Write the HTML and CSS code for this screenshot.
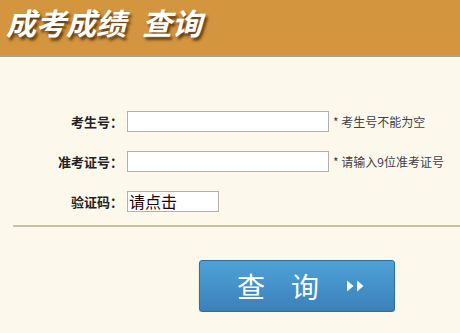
FILE: index.html
```html
<!DOCTYPE html>
<html lang="zh-CN">
<head>
  <meta charset="UTF-8">
  <title>成考成绩查询</title>
  <link rel="stylesheet" href="styles.css">
</head>
<body>
  <div class="header">
    <h1>成考成绩<span class="gap"></span>查询</h1>
  </div>

  <div class="form">
    <div class="row">
      <label>考生号：</label>
      <input type="text" class="field">
      <span class="tip">* 考生号不能为空</span>
    </div>
    <div class="row">
      <label>准考证号：</label>
      <input type="text" class="field">
      <span class="tip">* 请输入9位准考证号</span>
    </div>
    <div class="row">
      <label>验证码：</label>
      <div class="captcha">请点击</div>
    </div>
  </div>

  <hr class="divider">

  <div class="actions">
    <button class="btn-query"><span>查</span><span>询</span>
      <svg width="22" height="14" viewBox="0 0 22 14"><path d="M2 1.5 L8.5 7 L2 12.5 Z M12 1.5 L18.5 7 L12 12.5 Z" fill="#fff"/></svg>
    </button>
  </div>
</body>
</html>
```

FILE: styles.css
```css
body {
  margin: 0;
  background-color: #fcf9ec;
  font-family: "Noto Sans CJK SC", "Liberation Sans", sans-serif;
}
/* orange title bar */
.header {
  background-color: #d4953f;
  height: 55px;
  border-bottom: 2px solid #a9a294;
}
.header h1 {
  margin: 0;
  padding: 2px 0 0 6px;
  font-size: 30px;
  line-height: 40px;
  font-style: italic;
  font-weight: bold;
  color: #fff;
  text-shadow: 2px 3px 3px rgba(60, 30, 0, 0.8);
}
.header .gap {
  display: inline-block;
  width: 16px;
}
.form {
  padding-top: 54px;
}
.row {
  display: flex;
  align-items: center;
  height: 21px;
  margin-bottom: 19px;
}
.row label {
  width: 123px;
  text-align: right;
  font-size: 13px;
  font-weight: bold;
  color: #222;
  padding-right: 4px;
}
.field {
  margin: 0;
  padding: 0;
  border: 1px solid #b0b0b0;
  box-sizing: content-box;
  width: 200px;
  height: 19px;
  background: #fff;
}
.tip {
  margin-left: 4px;
  font-size: 12px;
  color: #3c4048;
}
.captcha {
  width: 89px;
  height: 19px;
  border: 1px solid #b0b0b0;
  background: #fff;
  font-size: 16px;
  line-height: 19px;
  color: #200;
  padding-left: 1px;
}
.divider {
  margin: -6px 0 0 13px;
  border: 0;
  border-top: 2px solid #c9c39c;
}
.actions {
  padding: 33px 0 0 199px;
}
.btn-query {
  width: 196px;
  height: 52px;
  border: 1px solid #2f6c9e;
  border-radius: 3px;
  background: linear-gradient(#4ea2d8, #3c80ba);
  color: #fff;
  font-family: "Noto Sans CJK SC", sans-serif;
  font-size: 28px;
  line-height: 1;
  display: flex;
  align-items: center;
  gap: 26px;
  padding: 0 0 0 37px;
  box-shadow: 0 1px 1px rgba(0, 0, 0, 0.2);
}
```
